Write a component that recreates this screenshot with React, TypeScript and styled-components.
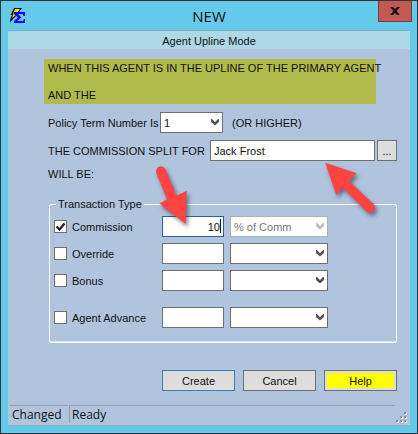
import React, { useState } from "react";
import styled, { createGlobalStyle, css } from "styled-components";

const GlobalStyle = createGlobalStyle`
  *, *::before, *::after { box-sizing: border-box; }
  body { margin: 0; font: 11px/16px "Liberation Sans", Arial, sans-serif; color: #111; }
  button, input, select { font: inherit; color: inherit; margin: 0; border-radius: 0; }
`;

const Window = styled.div`
  position: relative;
  display: flex;
  flex-direction: column;
  min-height: 100vh;
  padding: 0 7px 7px;
  border: 1px solid #33343a;
  background: #65caea;
`;

const TitleBar = styled.header`
  display: grid;
  grid-template-columns: 50px 1fr 50px;
  align-items: center;
  height: 29px;
`;

const Title = styled.h1`
  margin: 0;
  text-align: center;
  font: 15px/20px "Open Sans", sans-serif;
`;

const CloseButton = styled.button`
  display: flex;
  align-items: center;
  justify-content: center;
  align-self: start;
  justify-self: end;
  width: 34px;
  height: 21px;
  margin-right: -2px;
  padding: 0;
  border: 1px solid #6b4048;
  border-top: 0;
  background: #c35a52;
`;

const Client = styled.main`
  flex: 1;
  display: flex;
  flex-direction: column;
  border-top: 1px solid #7aafc9;
  border-bottom: 1px solid #8fb0c6;
  background: #b0c4de;
`;

const ModeBar = styled.div`
  height: 18px;
  line-height: 20px;
  text-align: center;
  background: #add8e6;
`;

const Content = styled.div`
  display: flex;
  flex-direction: column;
  flex: 1;
  padding: 10px 13px 0 36px;
`;

const Notice = styled.div`
  margin-right: 21px;
  padding: 0 4px;
  height: 45px;
  white-space: nowrap;
  background: #b0bb4c;
  p { margin: 0; line-height: 18px; }
  p + p { margin-top: 9px; }
`;

const Line = styled.div<{ $top: number }>`
  display: flex;
  align-items: center;
  margin-top: ${(p) => p.$top}px;
  padding-left: 4px;
  white-space: nowrap;
`;

const field = css`
  height: 21px;
  border: 1px solid #707070;
  background: #fff;
  outline: none;
`;

const TextBox = styled.input<{ $active?: boolean }>`
  ${field}
  display: block;
  width: 100%;
  min-width: 0;
  padding: 0 3px;
  border-color: ${(p) => (p.$active ? "#2d628f" : "#707070")};
  text-align: ${(p) => (p.$active ? "right" : "left")};
`;

const SelectWrap = styled.span`
  position: relative;
  display: block;
  svg { position: absolute; right: 4px; top: 7px; pointer-events: none; }
`;

const SelectBox = styled.select`
  ${field}
  display: block;
  appearance: none;
  width: 100%;
  padding: 0 18px 0 3px;
  &:disabled { color: #777; border-color: #adb2b5; opacity: 1; }
`;

const TermLabel = styled.label`
  width: 112px;
`;

const TermSelect = styled.div`
  width: 63px;
  margin-right: 9px;
`;

const SplitLabel = styled.label`
  width: 162px;
`;

const SplitField = styled.div`
  flex: 1;
  margin-right: 2px;
`;

const PushButton = styled.button<{ $tone?: "primary" | "help" }>`
  width: 73px;
  height: 21px;
  padding: 0;
  border: 1px solid ${(p) => (p.$tone === "primary" ? "#3c7fb1" : "#707070")};
  background: ${(p) => (p.$tone === "help" ? "#ff0" : "#ddd")};
  box-shadow: inset 0 0 0 2px #ddd;
`;

const BrowseButton = styled(PushButton)`
  width: 20px;
`;

const Group = styled.fieldset`
  margin: 14px 0 0 5px;
  padding: 4px 68px 14px 4px;
  min-width: 0;
  border: 1px solid #fff;
  border-radius: 2px;
  box-shadow: inset 0 -1px 0 #dde5f0;
`;

const Legend = styled.legend`
  margin-left: 2px;
  padding: 0 2px;
`;

const Row = styled.div<{ $gap?: number }>`
  display: grid;
  grid-template-columns: 102px 62px 1fr;
  column-gap: 6px;
  align-items: center;
  margin-top: ${(p) => p.$gap ?? 0}px;
`;

const CheckLabel = styled.label`
  position: relative;
  display: flex;
  align-items: center;
  gap: 5px;
  white-space: nowrap;
  svg { position: absolute; left: 0; top: 1px; pointer-events: none; }
`;

const CheckBox = styled.input`
  appearance: none;
  flex: none;
  width: 13px;
  height: 13px;
  border: 1px solid #707070;
  background: #fff;
`;

const AmountCell = styled.span`
  position: relative;
  display: block;
`;

const Caret = styled.i`
  position: absolute;
  right: 3px;
  top: 3px;
  width: 1px;
  height: 14px;
  background: #111;
`;

const Actions = styled.div`
  display: flex;
  justify-content: flex-end;
  gap: 8px;
  margin-top: auto;
  padding-bottom: 14px;
`;

const StatusBar = styled.footer`
  display: flex;
  height: 20px;
  font: 12px/18px "Open Sans", sans-serif;
`;

const StatusCell = styled.span<{ $wide?: boolean }>`
  border-top: 1px solid #9b9fa6;
  ${(p) =>
    p.$wide
      ? css`flex: 1; height: 18px; padding-left: 2px; border-left: 1px solid #9b9fa6; margin-left: 1px;`
      : css`width: 59px; padding-left: 3px; margin-left: 1px;`}
`;

const Grip = styled.span`
  display: flex;
  align-items: flex-end;
  width: 15px;
  padding: 0 2px 1px 1px;
`;

const Pointers = styled.svg`
  position: absolute;
  left: 140px;
  top: 150px;
  pointer-events: none;
  filter: drop-shadow(2px 3px 2px rgba(40, 50, 70, 0.6));
`;

function Chevron({ muted = false }: { muted?: boolean }) {
  return (
    <svg width="8" height="7" viewBox="0 0 8 7" aria-hidden="true">
      <path d="M0 0h1l3 3 3-3h1v3L4 6.5 0 3z" fill={muted ? "#b8b8b8" : "#555"} />
    </svg>
  );
}

function Choice({ label, options, disabled }: { label: string; options: string[]; disabled?: boolean }) {
  return (
    <SelectWrap>
      <SelectBox aria-label={label} disabled={disabled}>
        {options.map((o) => (
          <option key={o}>{o}</option>
        ))}
      </SelectBox>
      <Chevron muted={disabled} />
    </SelectWrap>
  );
}

function TransactionRow({ name, gap, selected }: { name: string; gap?: number; selected?: boolean }) {
  const [checked, setChecked] = useState(!!selected);
  return (
    <Row $gap={gap}>
      <CheckLabel>
        <CheckBox type="checkbox" checked={checked} onChange={(e) => setChecked(e.target.checked)} />
        {checked && (
          <svg width="13" height="13" viewBox="0 0 13 13" aria-hidden="true">
            <path d="M2.5 6.5l3 3 5-6" fill="none" stroke="#222" strokeWidth="2.2" />
          </svg>
        )}
        {name}
      </CheckLabel>
      <AmountCell>
        <TextBox aria-label={`${name} amount`} $active={selected} defaultValue={selected ? "10" : ""} />
        {selected && <Caret />}
      </AmountCell>
      <Choice label={`${name} basis`} options={[selected ? "% of Comm" : ""]} disabled={selected} />
    </Row>
  );
}

export default function App() {
  return (
    <>
      <GlobalStyle />
      <Window>
        <TitleBar>
          <svg width="18" height="18" viewBox="0 0 18 18" aria-hidden="true">
            <path d="M6 1h8l-3.500 5H12l-5 4-5 5.500V13l2-5H2.500z" fill="#111" />
            <path d="M7 2h5L8.500 6.500H10L6 9.500 4 11l1.500-4H5z" fill="#ffe600" />
            <path d="M6 5h11v4h-1.500l-1-2H10l3.500 3.500L9.500 14H15l1-2h1v4H6v-2l4-3.500L6 7z" fill="#0808f0" />
          </svg>
          <Title>NEW</Title>
          <CloseButton aria-label="Close">
            <svg width="10" height="8" viewBox="0 0 10 8" aria-hidden="true">
              <path d="M0 0h3l2 2 2-2h3L6.500 4 10 8H7L5 6 3 8H0l3.500-4z" fill="#111" />
            </svg>
          </CloseButton>
        </TitleBar>
        <Client>
          <ModeBar>Agent Upline Mode</ModeBar>
          <Content>
            <Notice>
              <p>WHEN THIS AGENT IS IN THE UPLINE OF THE PRIMARY AGENT</p>
              <p>AND THE</p>
            </Notice>
            <Line $top={8}>
              <TermLabel htmlFor="term">Policy Term Number Is</TermLabel>
              <TermSelect>
                <SelectWrap>
                  <SelectBox id="term">
                    <option>1</option>
                  </SelectBox>
                  <Chevron />
                </SelectWrap>
              </TermSelect>
              (OR HIGHER)
            </Line>
            <Line $top={7}>
              <SplitLabel htmlFor="agent">THE COMMISSION SPLIT FOR</SplitLabel>
              <SplitField>
                <TextBox id="agent" defaultValue="Jack Frost" />
              </SplitField>
              <BrowseButton aria-label="Browse agents">...</BrowseButton>
            </Line>
            <Line $top={5}>WILL BE:</Line>
            <Group>
              <Legend>Transaction Type</Legend>
              <TransactionRow name="Commission" selected />
              <TransactionRow name="Override" gap={6} />
              <TransactionRow name="Bonus" gap={6} />
              <TransactionRow name="Agent Advance" gap={16} />
            </Group>
            <Actions>
              <PushButton $tone="primary">Create</PushButton>
              <PushButton>Cancel</PushButton>
              <PushButton $tone="help">Help</PushButton>
            </Actions>
          </Content>
          <StatusBar>
            <StatusCell>Changed</StatusCell>
            <StatusCell $wide>Ready</StatusCell>
            <Grip>
              <svg width="12" height="12" viewBox="0 0 12 12" aria-hidden="true">
                {[[8, 0], [4, 4], [8, 4], [0, 8], [4, 8], [8, 8]].map(([x, y]) => (
                  <g key={`${x}-${y}`}>
                    <rect x={x + 1} y={y + 1} width="2" height="2" fill="#fff" />
                    <rect x={x} y={y} width="2" height="2" fill="#8e949c" />
                  </g>
                ))}
              </svg>
            </Grip>
          </StatusBar>
        </Client>
        <Pointers width="240" height="80" viewBox="141 151 240 80" aria-hidden="true">
          <path d="M156.500 173.500a4.800 4.800 0 0 1 9-4.300l11 26.500 10.200-5L185.700 224 159.300 203.500l7.700-4.300z" fill="#ff4343" />
          <path d="M325.300 162.700l31.400 10.600-7.700 7.700 24.500 23a5 5 0 0 1-7 7.300l-23.800-23.600-6.400 7.300z" fill="#ff4343" />
        </Pointers>
      </Window>
    </>
  );
}
